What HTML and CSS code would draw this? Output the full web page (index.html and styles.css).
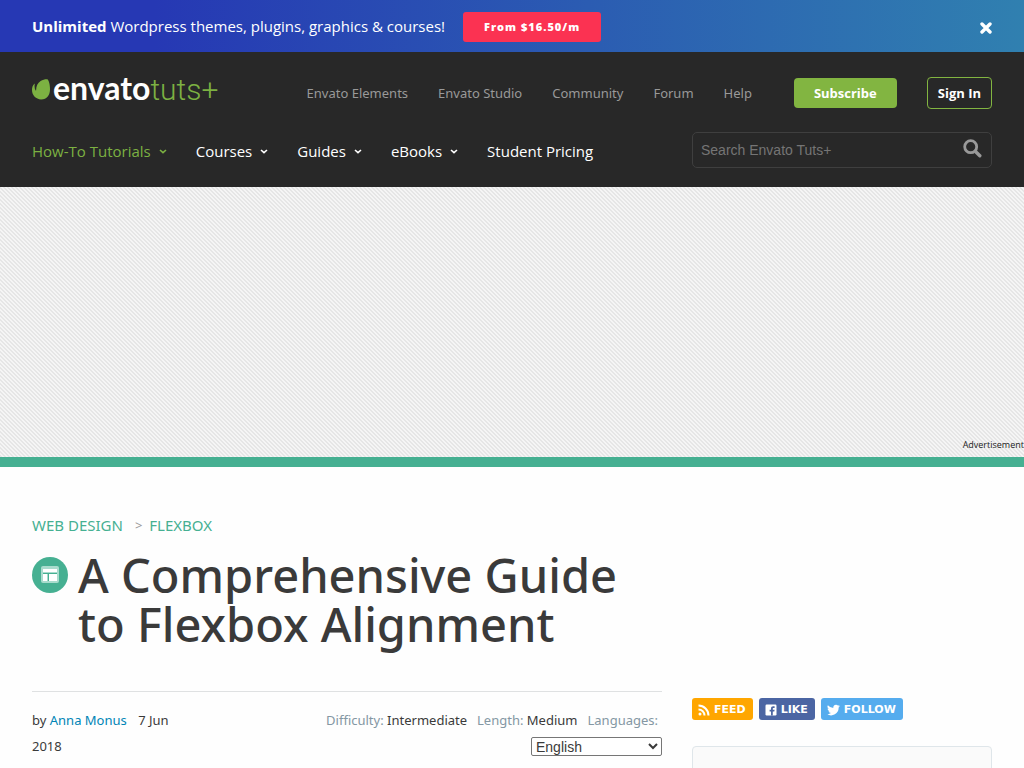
FILE: index.html
```html
<!DOCTYPE html>
<html lang="en">
<head>
<meta charset="utf-8">
<meta name="viewport" content="width=device-width, initial-scale=1">
<title>A Comprehensive Guide to Flexbox Alignment</title>
<link rel="stylesheet" href="styles.css">
</head>
<body>
<aside class="promo">
  <p class="promo-text"><strong>Unlimited</strong> Wordpress themes, plugins, graphics &amp; courses!</p>
  <a class="promo-button" href="#">From $16.50/m</a>
  <button class="promo-close" type="button" aria-label="Close">
    <svg width="12" height="12" viewBox="0 0 12 12"><path d="M2 2l8 8M10 2l-8 8" stroke="#fff" stroke-width="3.4" stroke-linecap="round"/></svg>
  </button>
</aside>
<header class="header">
  <div class="header-row">
    <a class="logo" href="#">
      <svg class="logo-leaf" width="19" height="21" viewBox="0 0 19 21"><path fill="#7cb142" d="M15.400.3C14.600-.1 11.200.2 8.600 2C5.600 4.200 4.200 7 4.100 11.300c0 .3-.3.4-.5.1C2.700 9.700 2.300 8 2.700 5.300c.1-.5-.4-.6-.6-.3C.8 6.400 0 8.500 0 11.100c0 5.500 4 9.300 9.100 9.300c5.900 0 8.900-4.600 8.900-10.200C18 5.400 16.700.9 15.400.3z"/></svg>
      <span class="logo-name"><span class="logo-envato">envato</span><span class="logo-tuts">tuts+</span></span>
    </a>
    <nav class="top-nav">
      <a href="#">Envato Elements</a>
      <a href="#">Envato Studio</a>
      <a href="#">Community</a>
      <a href="#">Forum</a>
      <a href="#">Help</a>
    </nav>
    <div class="account">
      <a class="subscribe" href="#">Subscribe</a>
      <a class="sign-in" href="#">Sign In</a>
    </div>
  </div>
  <div class="header-row header-row-main">
    <nav class="main-nav">
      <a class="active" href="#">How-To Tutorials <svg class="chevron" viewBox="0 0 8 5"><path d="M1 1l3 2.600L7 1"/></svg></a>
      <a href="#">Courses <svg class="chevron" viewBox="0 0 8 5"><path d="M1 1l3 2.600L7 1"/></svg></a>
      <a href="#">Guides <svg class="chevron" viewBox="0 0 8 5"><path d="M1 1l3 2.600L7 1"/></svg></a>
      <a href="#">eBooks <svg class="chevron" viewBox="0 0 8 5"><path d="M1 1l3 2.600L7 1"/></svg></a>
      <a href="#">Student Pricing</a>
    </nav>
    <form class="search">
      <input type="search" placeholder="Search Envato Tuts+" aria-label="Search Envato Tuts+">
      <button type="submit" aria-label="Search">
        <svg width="19" height="19" viewBox="0 0 19 19" fill="none" stroke="#999"><circle cx="7.700" cy="7.700" r="6" stroke-width="2.800"/><path d="M12.500 12.500l4.300 4.300" stroke-width="3.400" stroke-linecap="round"/></svg>
      </button>
    </form>
  </div>
</header>
<section class="ad">Advertisement</section>
<main class="content">
  <article class="article">
    <nav class="breadcrumbs"><a href="#">Web Design</a><span>&gt;</span><a href="#">Flexbox</a></nav>
    <div class="title">
      <svg class="topic-icon" width="36" height="36" viewBox="0 0 36 36"><circle cx="18" cy="18" r="18" fill="#46b092"/><rect x="9" y="9" width="18" height="17" rx="2" fill="#a9dccd"/><path fill="#fff" d="M11 12h14v3H11zM11 17h4v7h-4zM17 17h8v7h-8z"/><path stroke="#46b092" d="M11 16.500h14M16.500 17v7"/></svg>
      <h1>A Comprehensive Guide to Flexbox Alignment</h1>
    </div>
    <div class="meta">
      <p class="byline">by <a href="#">Anna Monus</a> <time datetime="2018-06-07">7 Jun 2018</time></p>
      <div class="details">
        <span>Difficulty: <b>Intermediate</b></span>
        <span>Length: <b>Medium</b></span>
        <label for="language">Languages:</label>
        <select id="language"><option>English</option></select>
      </div>
    </div>
  </article>
  <aside class="sidebar">
    <div class="social">
      <a class="feed" href="#"><svg width="12" height="12" viewBox="0 0 12 12" fill="none" stroke="#fff" stroke-width="2"><circle cx="2" cy="10" r="1.500" fill="#fff" stroke="none"/><path d="M.5 5.500A6 6 0 0 1 6.500 11.500M.5 1.500A10 10 0 0 1 10.500 11.500"/></svg>Feed</a>
      <a class="like" href="#"><svg width="12" height="12" viewBox="0 0 12 12"><rect x=".5" y=".5" width="11" height="11" rx="1.200" fill="#fff"/><path fill="#4b65a3" d="M6 11.500V7.500H4.600V5.700H6V4.500C6 3 6.900 2.200 8.300 2.200h1.300v1.700h-.9c-.7 0-.9.300-.9.900v.9h1.800L9.300 7.500H7.800v4z"/></svg>Like</a>
      <a class="follow" href="#"><svg width="13" height="12" viewBox="0 0 24 22"><path fill="#fff" d="M24 3.600a10 10 0 0 1-2.800.8 5 5 0 0 0 2.100-2.700 10 10 0 0 1-3.100 1.200 4.900 4.900 0 0 0-8.400 4.500A14 14 0 0 1 1.700 2.200a4.900 4.900 0 0 0 1.500 6.600 5 5 0 0 1-2.200-.6c-.1 2.300 1.600 4.400 3.900 4.900a5 5 0 0 1-2.200.1 4.900 4.900 0 0 0 4.600 3.400A9.900 9.900 0 0 1 0 18.600a14 14 0 0 0 21.500-12.400A10 10 0 0 0 24 3.600z"/></svg>Follow</a>
    </div>
    <div class="card"></div>
  </aside>
</main>
</body>
</html>
```
FILE: styles.css
```css
* {
  box-sizing: border-box;
}

body {
  margin: 0;
  background: #fefefe;
  color: #3a3a3a;
  font-family: "Segoe UI", "Noto Sans", "Open Sans", sans-serif;
  font-size: 13px;
}

a {
  text-decoration: none;
}

button {
  border: 0;
  padding: 0;
  background: none;
  cursor: pointer;
}

svg {
  display: block;
  flex: none;
}

.promo {
  display: flex;
  align-items: center;
  gap: 18px;
  height: 52px;
  padding: 1px 32px 0;
  background: linear-gradient(90deg, #2638b4, #2638b4 15%, #3080b0);
  color: #fff;
}

.promo-text {
  margin: 0;
  padding-bottom: 2px;
  font-family: "Segoe UI", "Open Sans", sans-serif;
  font-size: 15px;
}

.promo-button {
  padding: 0 21px;
  border-radius: 3px;
  background: #fb3252;
  color: #fff;
  font-family: "Segoe UI", "Open Sans", sans-serif;
  font-size: 11px;
  font-weight: 800;
  line-height: 30px;
  letter-spacing: 1px;
}

.promo-close {
  margin-left: auto;
  padding-top: 3px;
}

.header {
  height: 135px;
  padding: 24px 32px 0;
  background: #282828;
}

.header-row {
  display: flex;
  align-items: center;
  height: 34px;
}

.header-row-main {
  height: 36px;
  margin-top: 22px;
  justify-content: space-between;
}

.logo {
  display: flex;
  align-items: center;
  height: 26px;
  padding-bottom: 12px;
  font-size: 32px;
}

.logo-leaf {
  margin: 4px 2px 0 0;
}

.logo-envato {
  color: #fff;
  font-family: Lato, sans-serif;
  font-weight: 700;
}

.logo-tuts {
  color: #7cb142;
  font-family: Roboto, sans-serif;
  font-size: 30px;
  font-weight: 300;
}

.top-nav {
  display: flex;
  gap: 30px;
  margin-left: auto;
}

.top-nav a {
  color: #999;
}

.account {
  display: flex;
  align-items: center;
  gap: 30px;
  margin-left: 42px;
  font-family: "Segoe UI", "Open Sans", sans-serif;
  font-weight: 700;
}

.account a {
  color: #fff;
  line-height: 30px;
  border-radius: 4px;
}

.subscribe {
  padding: 0 20px;
  background: #82b541;
}

.sign-in {
  padding: 0 10px;
  border: 1px solid #82b541;
}

.main-nav {
  display: flex;
  gap: 29px;
  padding-top: 2px;
  font-family: "Segoe UI", "Open Sans", sans-serif;
  font-size: 15px;
}

.main-nav a {
  display: flex;
  align-items: center;
  gap: 8px;
  color: #fff;
}

.main-nav .active {
  color: #7cb142;
}

.chevron {
  width: 8px;
  height: 5px;
  fill: none;
  stroke: currentColor;
  stroke-width: 1.6;
}

.search {
  display: flex;
  width: 300px;
  height: 36px;
  border: 1px solid #3f3f3f;
  border-radius: 5px;
  padding: 0 9px 4px 8px;
  align-items: center;
}

.search input {
  flex: 1;
  min-width: 0;
  padding: 4px 0 0;
  border: 0;
  outline: 0;
  background: none;
  color: #fff;
  font-family: "Liberation Sans", Arial, sans-serif;
  font-size: 14px;
}

.search input::placeholder {
  color: #757575;
}

.ad {
  display: flex;
  align-items: flex-end;
  justify-content: flex-end;
  height: 280px;
  padding-bottom: 6px;
  border-bottom: 10px solid #46b092;
  background: linear-gradient(45deg, #f5f5f5 25%, #e6e6e6 25%, #e6e6e6 50%, #f5f5f5 50%, #f5f5f5 75%, #e6e6e6 75%) 0 0 / 4px 4px;
  color: #222;
  font-family: "Segoe UI", "Open Sans", sans-serif;
  font-size: 9px;
}

.content {
  display: grid;
  grid-template-columns: minmax(0, 1fr) 300px;
  gap: 30px;
  padding: 47px 32px 0;
}

.breadcrumbs {
  display: flex;
  align-items: center;
  color: #999;
  line-height: 22px;
}

.breadcrumbs a {
  color: #46b092;
  font-size: 15px;
  text-transform: uppercase;
}

.breadcrumbs span {
  margin: 0 7px 0 12px;
}

.title {
  display: flex;
  gap: 10px;
  padding: 15px 0 42px;
  border-bottom: 1px solid #dfe1e2;
}

.topic-icon {
  margin-top: 6px;
}

h1 {
  max-width: 560px;
  margin: 0;
  font-size: 47px;
  font-weight: 500;
  line-height: 49px;
}

.meta {
  display: flex;
  justify-content: space-between;
  padding-top: 15px;
  line-height: 26px;
}

.byline {
  width: 25%;
  margin: 0;
}

.byline a {
  margin-right: 8px;
  color: #0085b6;
}

.details {
  display: flex;
  flex-wrap: wrap;
  justify-content: flex-end;
  align-content: flex-start;
  column-gap: 10px;
  width: 55%;
  color: #8497a3;
}

.details b {
  color: #3a3a3a;
  font-weight: 400;
}

.details label {
  margin-right: 4px;
}

.details select {
  width: 131px;
  height: 19px;
  margin-top: 4px;
  padding: 0;
  border: 1px solid #767676;
  border-radius: 2px;
  background: #fff;
  color: #3a3a3a;
  font-family: "Liberation Sans", Arial, sans-serif;
  font-size: 14px;
  line-height: normal;
}

.sidebar {
  padding-top: 184px;
}

.social {
  display: flex;
  gap: 6px;
}

.social a {
  display: flex;
  align-items: center;
  gap: 4px;
  padding: 1px 7px 0 6px;
  border-radius: 3px;
  color: #fff;
  font-family: "DejaVu Sans", sans-serif;
  font-size: 11px;
  font-weight: 700;
  line-height: 21px;
  text-transform: uppercase;
}

.feed {
  background: #ffa600;
}

.like {
  background: #4b65a3;
}

.follow {
  background: #55acee;
}

.card {
  height: 200px;
  margin-top: 26px;
  border: 1px solid #dfe6ea;
  border-radius: 4px;
  background: #fafafa;
}
```
